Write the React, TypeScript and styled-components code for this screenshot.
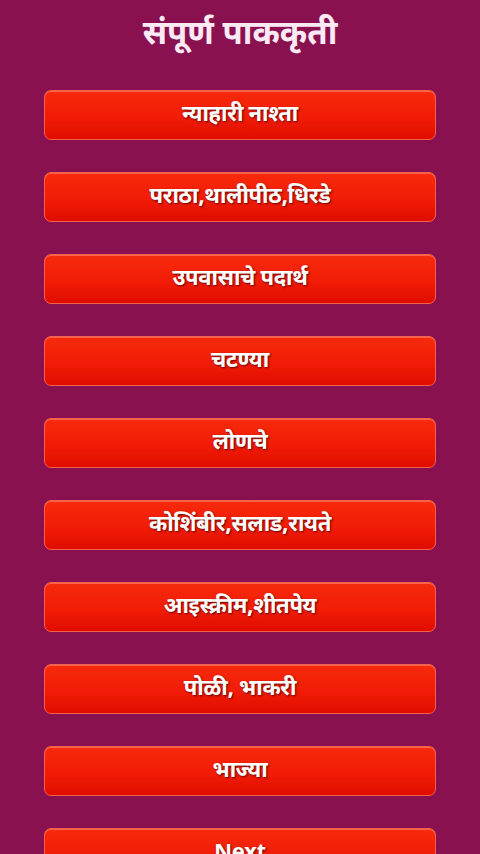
import React from 'react'
import styled, { createGlobalStyle } from 'styled-components'

const GlobalStyle = createGlobalStyle`
  html, body {
    margin: 0;
    padding: 0;
    background: #8a1150;
  }
  body {
    font-family: "Noto Sans Devanagari", "Noto Sans", "Lohit Devanagari", "Liberation Sans", sans-serif;
  }
`

const Page = styled.div`
  width: 480px;
  height: 854px;
  overflow: hidden;
  background: #8a1150;
  display: flex;
  flex-flow: column;
  align-items: center;
`

const Title = styled.h1`
  flex-shrink: 0;
  margin: 12px 0 0;
  height: 58px;
  line-height: 48px;
  font-size: 33px;
  font-weight: 700;
  color: #fbeaf4;
  text-align: center;
`

const Menu = styled.div`
  flex-shrink: 0;
  display: flex;
  flex-flow: column;
  gap: 32px;
  margin-top: 20px;
`

const MenuButton = styled.button`
  flex-shrink: 0;
  width: 392px;
  height: 50px;
  padding: 0;
  border: 1px solid #f5604a;
  border-radius: 7px;
  background: linear-gradient(to bottom, #f62a0c 0%, #f21c06 55%, #df0c00 100%);
  box-shadow: inset 0 1px 0 rgba(255, 140, 120, 0.6);
  color: #ffffff;
  font-family: inherit;
  font-size: 22px;
  font-weight: 700;
  letter-spacing: -0.3px;
  text-shadow: 1px 1px 2px rgba(60, 0, 0, 0.8);
  display: flex;
  align-items: center;
  justify-content: center;
  cursor: pointer;
`

const items = [
  'न्याहारी नाश्ता',
  'पराठा,थालीपीठ,धिरडे',
  'उपवासाचे पदार्थ',
  'चटण्या',
  'लोणचे',
  'कोशिंबीर,सलाड,रायते',
  'आइस्क्रीम,शीतपेय',
  'पोळी, भाकरी',
  'भाज्या',
  'Next',
]

const App: React.FC = () => (
  <Page>
    <GlobalStyle />
    <Title>संपूर्ण पाककृती</Title>
    <Menu>
      {items.map((label) => (
        <MenuButton key={label}>{label}</MenuButton>
      ))}
    </Menu>
  </Page>
)

export default App
